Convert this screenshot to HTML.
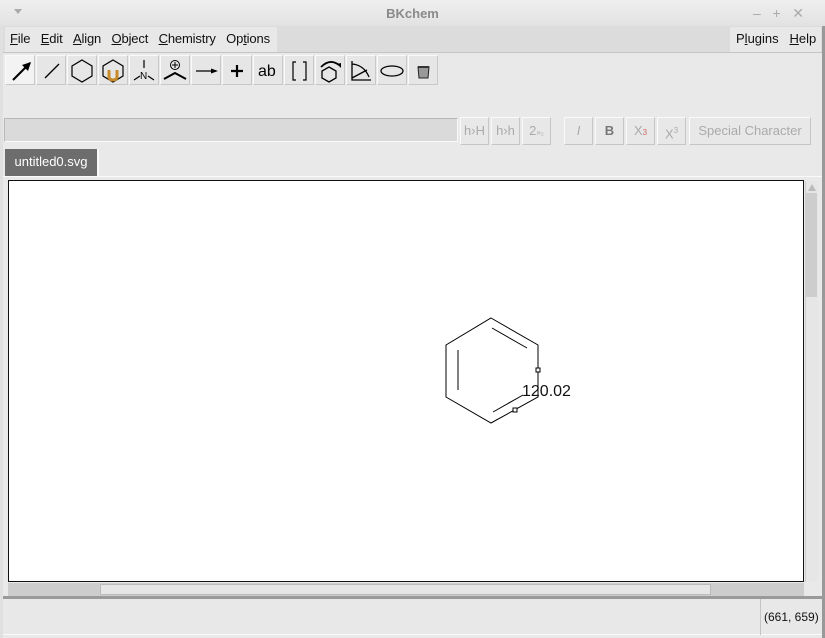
<!DOCTYPE html>
<html><head><style>
*{margin:0;padding:0;box-sizing:border-box}
body{width:825px;height:638px;background:#e9e9e9;font-family:"Liberation Sans",sans-serif;position:relative;overflow:hidden;font-size:13px;color:#111}
.abs{position:absolute}
.btn{position:absolute;top:55px;width:30px;height:30px;background:#e6e6e6;border:1px solid #c8c8c8;border-top-color:#fafafa;border-left-color:#fafafa}
.btn svg{position:absolute;left:0;top:0}
.fb{position:absolute;top:117px;height:28px;border:1px solid #c6c6c6;border-top-color:#fafafa;border-left-color:#fafafa;background:#e8e8e8;color:#aaa;font-size:13px;text-align:center;line-height:26px}
u{text-decoration:underline}
</style></head><body>
<div class="abs" style="left:0;top:0;width:825px;height:27px;background:linear-gradient(#efefef,#e2e2e2);border-bottom:1px solid #fff"></div>
<div class="abs" style="left:14px;top:9px;width:0;height:0;border-left:4px solid transparent;border-right:4px solid transparent;border-top:5px solid #aaa"></div>
<div class="abs" style="left:0;top:6px;width:825px;text-align:center;font-weight:bold;color:#8a8a8a;font-size:13px">BKchem</div>
<div class="abs" style="left:753px;top:5px;color:#aaa;font-size:14px;letter-spacing:0">–&nbsp;&nbsp;&nbsp;+&nbsp;&nbsp;&nbsp;✕</div>
<div class="abs" style="left:3px;top:26px;width:819px;height:27px;background:#dcdcdc;border-bottom:1px solid #c4c4c4"></div>
<div class="abs" style="left:5px;top:27px;width:272px;height:25px;background:#e8e8e8"></div>
<div class="abs" style="left:730px;top:27px;width:91px;height:25px;background:#e8e8e8"></div>
<div class="abs" style="left:10px;top:31px;font-size:13px;letter-spacing:-0.15px"><u>F</u>ile&nbsp;&nbsp;&nbsp;<u>E</u>dit&nbsp;&nbsp;&nbsp;<u>A</u>lign&nbsp;&nbsp;&nbsp;<u>O</u>bject&nbsp;&nbsp;&nbsp;<u>C</u>hemistry&nbsp;&nbsp;&nbsp;Op<u>t</u>ions</div>
<div class="abs" style="left:736px;top:31px;font-size:13px">P<u>l</u>ugins&nbsp;&nbsp;&nbsp;<u>H</u>elp</div>

<div class="btn" style="left:5px;background:#f3f3f3"><svg width="30" height="30"><path d="M7 24L24 7" stroke="#000" stroke-width="2"/><path d="M25 6L16 9L22 15Z" fill="#000"/></svg></div>
<div class="btn" style="left:36px"><svg width="30" height="30"><path d="M8 22L22 8" stroke="#000" stroke-width="1.3"/></svg></div>
<div class="btn" style="left:67px"><svg width="30" height="30"><path d="M14 4L24 10L24 20L14 26L4 20L4 10Z" fill="none" stroke="#000" stroke-width="1.2"/></svg></div>
<div class="btn" style="left:98px"><svg width="30" height="30"><path d="M14 4L24 10L24 20L14 26L4 20L4 10Z" fill="none" stroke="#000" stroke-width="1.2"/><path d="M10 14v7a4 3 0 0 0 8 0v-7" fill="none" stroke="#c98b2a" stroke-width="3"/></svg></div>
<div class="btn" style="left:129px"><svg width="30" height="30"><path d="M14 4v8M4 24l6-4M24 24l-6-4" stroke="#000" stroke-width="1.2"/><text x="10" y="23" font-size="10" font-family="Liberation Sans">N</text></svg></div>
<div class="btn" style="left:160px"><svg width="30" height="30"><circle cx="14" cy="9" r="4.5" fill="none" stroke="#000"/><path d="M14 6v6M11 9h6" stroke="#000"/><path d="M3 23L14 17L25 23" fill="none" stroke="#000" stroke-width="2"/></svg></div>
<div class="btn" style="left:191px"><svg width="30" height="30"><path d="M4 15H24" stroke="#000" stroke-width="1.3"/><path d="M26 15L19 12.5V17.5Z" fill="#000"/></svg></div>
<div class="btn" style="left:222px"><svg width="30" height="30"><path d="M14 9v12M8 15h12" stroke="#000" stroke-width="2.2"/></svg></div>
<div class="btn" style="left:253px"><svg width="30" height="30"><text x="4" y="20" font-size="16" font-family="Liberation Sans">ab</text></svg></div>
<div class="btn" style="left:284px"><svg width="30" height="30"><path d="M11 6H8V24H11M18 6H21V24H18" fill="none" stroke="#000" stroke-width="1.2"/></svg></div>
<div class="btn" style="left:315px"><svg width="30" height="30"><path d="M13 11L20 15L20 22L13 26L6 22L6 15Z" fill="none" stroke="#000" stroke-width="1.3"/><path d="M5 11Q14 2 23 9" fill="none" stroke="#000" stroke-width="1.8"/><path d="M25 12L21 8L25 7Z" fill="#000"/></svg></div>
<div class="btn" style="left:346px"><svg width="30" height="30"><path d="M5 5V24H24M5 22L20 14M5 8Q17 9 22 21" fill="none" stroke="#000" stroke-width="1.3"/></svg></div>
<div class="btn" style="left:377px"><svg width="30" height="30"><ellipse cx="14" cy="15" rx="11" ry="5" fill="none" stroke="#000" stroke-width="1.3"/></svg></div>
<div class="btn" style="left:408px"><svg width="30" height="30"><path d="M9 11H20L19 22H10Z" fill="#999" stroke="#222"/><path d="M9 11h11" stroke="#333" stroke-width="2"/></svg></div>

<div class="abs" style="left:4px;top:118px;width:454px;height:24px;background:#dadada;border:1px solid #b8b8b8;border-bottom-color:#fafafa;border-right-color:#fafafa"></div>
<div class="fb" style="left:460px;width:29px">h›H</div>
<div class="fb" style="left:491px;width:29px">h›h</div>
<div class="fb" style="left:522px;width:29px">2<span style="font-size:8px">»₂</span></div>
<div class="fb" style="left:564px;width:29px"><i>I</i></div>
<div class="fb" style="left:595px;width:29px;color:#777"><b>B</b></div>
<div class="fb" style="left:626px;width:29px">X<span style="font-size:8px;color:#c66">3</span></div>
<div class="fb" style="left:657px;width:29px">X<sup style="font-size:8px">3</sup></div>
<div class="fb" style="left:689px;width:122px">Special Character</div>

<div class="abs" style="left:5px;top:149px;width:94px;height:27px;background:#6d6d6d;color:#fff;font-size:13px;text-align:center;line-height:26px;border-right:2px solid #fafafa">untitled0.svg</div>
<div class="abs" style="left:3px;top:176px;width:819px;height:1px;background:#fafafa"></div>

<div class="abs" style="left:8px;top:180px;width:796px;height:402px;background:#fff;border:1px solid #111"></div>
<svg class="abs" style="left:0;top:0" width="825" height="638">
<path d="M491 318L538 345L538 397L491 423L446 397L446 345Z" fill="none" stroke="#000" stroke-width="1"/>
<path d="M492 328L527 348M458 350V390M493 412L523 395" stroke="#000" stroke-width="1"/>
<rect x="536" y="368" width="4" height="4" fill="#fff" stroke="#000" stroke-width="1"/>
<rect x="513" y="408" width="4" height="4" fill="#fff" stroke="#000" stroke-width="1"/>
<text x="522" y="396" font-size="16" font-family="Liberation Sans" fill="#111">120.02</text>
</svg>

<div class="abs" style="left:805px;top:181px;width:13px;height:401px;background:#e6e6e6;border-left:1px solid #ccc"></div>
<div class="abs" style="left:806px;top:193px;width:11px;height:104px;background:#cdcdcd"></div>
<div class="abs" style="left:808px;top:184px;width:0;height:0;border-left:4px solid transparent;border-right:4px solid transparent;border-bottom:7px solid #bbb"></div>
<div class="abs" style="left:8px;top:583px;width:796px;height:13px;background:#cdcdcd"></div>
<div class="abs" style="left:100px;top:584px;width:611px;height:11px;background:#e6e6e6;border:1px solid #bbb"></div>
<div class="abs" style="left:0;top:596px;width:825px;height:3px;background:#9a9a9a"></div>
<div class="abs" style="left:3px;top:599px;width:819px;height:36px;background:#e8e8e8;border-bottom:1px solid #fafafa"></div>
<div class="abs" style="left:760px;top:599px;width:1px;height:36px;background:#c4c4c4"></div>
<div class="abs" style="left:764px;top:610px;font-size:12px">(661, 659)</div>
<div class="abs" style="left:822px;top:26px;width:3px;height:612px;background:#999"></div>
<div class="abs" style="left:0;top:26px;width:3px;height:612px;background:#e0e0e0"></div>
</body></html>
